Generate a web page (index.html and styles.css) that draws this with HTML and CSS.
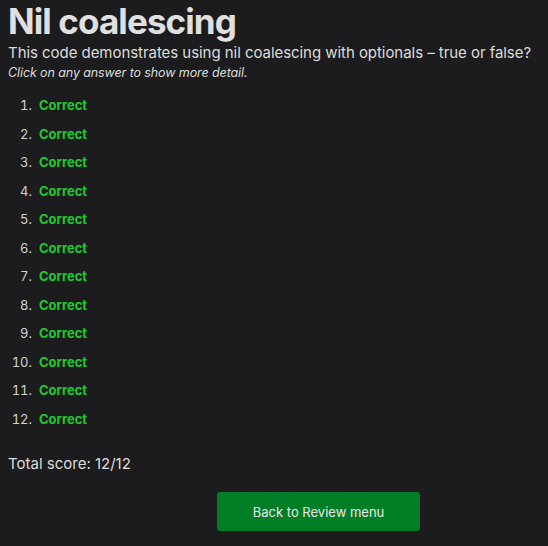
FILE: index.html
```html
<!DOCTYPE html>
<html>
<head>
<meta charset="utf-8">
<link rel="stylesheet" href="styles.css">
</head>
<body>
<main class="page">
  <h1 class="title">Nil coalescing</h1>
  <p class="subtitle">This code demonstrates using nil coalescing with optionals – true or false?</p>
  <p class="hint">Click on any answer to show more detail.</p>
  <ol class="answers">
    <li><span class="ok">Correct</span></li>
    <li><span class="ok">Correct</span></li>
    <li><span class="ok">Correct</span></li>
    <li><span class="ok">Correct</span></li>
    <li><span class="ok">Correct</span></li>
    <li><span class="ok">Correct</span></li>
    <li><span class="ok">Correct</span></li>
    <li><span class="ok">Correct</span></li>
    <li><span class="ok">Correct</span></li>
    <li><span class="ok">Correct</span></li>
    <li><span class="ok">Correct</span></li>
    <li><span class="ok">Correct</span></li>
  </ol>
  <p class="score">Total score: 12/12</p>
  <div class="actions">
    <button class="back">Back to Review menu</button>
  </div>
</main>
</body>
</html>
```

FILE: styles.css
```css
html, body {
  margin: 0;
  padding: 0;
  background: #1c1c1e;
}
body {
  font-family: Inter, "Noto Sans", sans-serif;
  color: #dcdcdc;
}
.page {
  padding: 0 8px;
}
.title {
  margin: 0;
  font-size: 35px;
  line-height: 43px;
  font-weight: 700;
  letter-spacing: -0.9px;
  color: #e0e0e0;
}
.subtitle {
  margin: 0;
  font-size: 15px;
  line-height: 20px;
  letter-spacing: -0.05px;
}
.hint {
  margin: 0;
  font-size: 12.5px;
  line-height: 20px;
  font-style: italic;
  letter-spacing: -0.1px;
}
.answers {
  margin: 8px 0 0;
  padding-left: 31px;
  font-size: 13px;
}
.answers li {
  line-height: 28.5px;
  color: #d0d0d0;
}
.answers li::marker {
  content: counter(list-item) ".  ";
}
.ok {
  color: #1ec92f;
  font-weight: 700;
}
.score {
  margin: 20px 0 0;
  font-size: 15px;
  line-height: 22px;
}
.actions {
  margin-top: 17px;
  padding-left: 209px;
}
.back {
  width: 203px;
  height: 39px;
  border: none;
  border-radius: 3px;
  background: #017d26;
  color: #e8e8e8;
  font-family: Inter, "Noto Sans", sans-serif;
  font-size: 13px;
}
```
